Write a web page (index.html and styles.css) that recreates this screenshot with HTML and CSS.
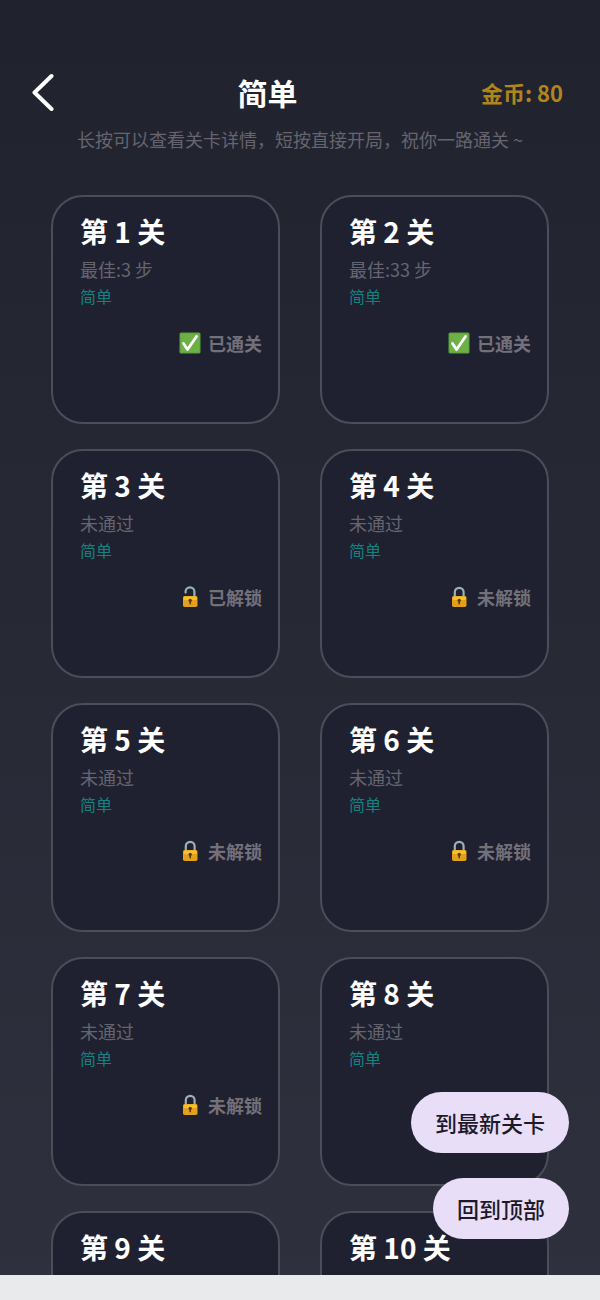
FILE: index.html
```
<!DOCTYPE html>
<html lang="zh-CN">

<head>
    <meta charset="UTF-8">
    <title>简单</title>
    <meta name="viewport" content="width=device-width, initial-scale=1" />
    <link rel="stylesheet" href="styles.css">
</head>

<body>
    <!-- shared icons -->
    <svg class="sprite" aria-hidden="true">
        <symbol id="passed" viewBox="0 0 22 22">
            <rect x="0.5" y="0.5" width="21" height="21" rx="1.5" fill="#5a9f3c" />
            <rect x="1.5" y="1.5" width="19" height="19" rx="1" fill="#6cb046" />
            <path d="M4.5 11.5 L8.5 17.5 L17.5 4.5" fill="none" stroke="#fff" stroke-width="2.8" stroke-linecap="round" stroke-linejoin="round" />
        </symbol>
        <symbol id="unlocked" viewBox="0 0 22 22">
            <path d="M6.6 6.6 V5.6 a4.4 4.2 0 0 1 8.8 0 V11" fill="none" stroke="#8fb4bf" stroke-width="2.2" stroke-linecap="round" />
            <rect x="4" y="10" width="14.5" height="11" rx="1.8" fill="#e2a01c" />
            <rect x="4.6" y="10.4" width="13.3" height="3.6" rx="1.2" fill="#f6c02e" />
            <circle cx="11.2" cy="14.4" r="1.7" fill="#5d3a12" />
            <path d="M11.2 15 V18.2" stroke="#5d3a12" stroke-width="1.6" />
        </symbol>
        <symbol id="locked" viewBox="0 0 22 22">
            <path d="M6.8 11 V6.2 a4.4 4.4 0 0 1 8.8 0 V11" fill="none" stroke="#9fb0b6" stroke-width="2.2" />
            <rect x="4" y="10" width="14.5" height="11" rx="1.8" fill="#e2a01c" />
            <rect x="4.6" y="10.4" width="13.3" height="3.6" rx="1.2" fill="#f6c02e" />
            <circle cx="11.2" cy="14.4" r="1.7" fill="#5d3a12" />
            <path d="M11.2 15 V18.2" stroke="#5d3a12" stroke-width="1.6" />
        </symbol>
    </svg>

    <div class="screen">
        <header class="header">
            <button class="back" aria-label="返回">
                <svg width="22" height="38" viewBox="0 0 22 38">
                    <path d="M19.5 3 L2.5 19.5 L19.5 36" fill="none" stroke="#fff" stroke-width="4" stroke-linecap="round" stroke-linejoin="round" />
                </svg>
            </button>
            <h1 class="title">简单</h1>
            <div class="coins">金币: 80</div>
        </header>
        <p class="hint">长按可以查看关卡详情&#xFF0C;短按直接开局&#xFF0C;祝你一路通关 ~</p>

        <main class="levels">
            <button class="level">
                <span class="level-name">第 1 关</span>
                <span class="level-best">最佳:3 步</span>
                <span class="level-mode">简单</span>
                <span class="level-status"><svg class="icon"><use href="#passed" /></svg>已通关</span>
            </button>
            <button class="level">
                <span class="level-name">第 2 关</span>
                <span class="level-best">最佳:33 步</span>
                <span class="level-mode">简单</span>
                <span class="level-status"><svg class="icon"><use href="#passed" /></svg>已通关</span>
            </button>
            <button class="level">
                <span class="level-name">第 3 关</span>
                <span class="level-best">未通过</span>
                <span class="level-mode">简单</span>
                <span class="level-status"><svg class="icon"><use href="#unlocked" /></svg>已解锁</span>
            </button>
            <button class="level">
                <span class="level-name">第 4 关</span>
                <span class="level-best">未通过</span>
                <span class="level-mode">简单</span>
                <span class="level-status"><svg class="icon"><use href="#locked" /></svg>未解锁</span>
            </button>
            <button class="level">
                <span class="level-name">第 5 关</span>
                <span class="level-best">未通过</span>
                <span class="level-mode">简单</span>
                <span class="level-status"><svg class="icon"><use href="#locked" /></svg>未解锁</span>
            </button>
            <button class="level">
                <span class="level-name">第 6 关</span>
                <span class="level-best">未通过</span>
                <span class="level-mode">简单</span>
                <span class="level-status"><svg class="icon"><use href="#locked" /></svg>未解锁</span>
            </button>
            <button class="level">
                <span class="level-name">第 7 关</span>
                <span class="level-best">未通过</span>
                <span class="level-mode">简单</span>
                <span class="level-status"><svg class="icon"><use href="#locked" /></svg>未解锁</span>
            </button>
            <button class="level">
                <span class="level-name">第 8 关</span>
                <span class="level-best">未通过</span>
                <span class="level-mode">简单</span>
            </button>
            <button class="level">
                <span class="level-name">第 9 关</span>
            </button>
            <button class="level">
                <span class="level-name">第 10 关</span>
            </button>
        </main>

        <div class="floating">
            <button class="jump">到最新关卡</button>
            <button class="jump">回到顶部</button>
        </div>
    </div>
    <div class="system-bar"></div>
</body>

</html>
```
FILE: styles.css
```
* {
    box-sizing: border-box;
}

body {
    display: flex;
    flex-direction: column;
    height: 100vh;
    margin: 0;
    color: white;
    font-family: "Noto Sans CJK SC", sans-serif;
}

button {
    margin: 0;
    padding: 0;
    border: none;
    background: none;
    color: inherit;
    font-family: inherit;
    cursor: pointer;
}

.sprite {
    display: none;
}

.screen {
    position: relative;
    flex: 1;
    min-height: 0;
    overflow: hidden;
    background: linear-gradient(#20222d, #2e313d);
}

.system-bar {
    height: 25px;
    background-color: #e9eaec;
}

.header {
    display: flex;
    justify-content: space-between;
    align-items: center;
    padding: 73px 37px 0 32px;
}

.back svg {
    display: block;
}

.title {
    margin: 0;
    font-size: 30px;
    line-height: 38px;
}

.coins {
    color: #b0851d;
    font-size: 22px;
    font-weight: bold;
    line-height: 38px;
}

.hint {
    margin: 14px 0 0;
    color: #66646f;
    font-size: 18px;
    line-height: 28px;
    text-align: center;
}

.levels {
    display: grid;
    grid-template-columns: 1fr 1fr;
    gap: 25px 40px;
    padding: 42px 51px 0;
}

.level {
    display: flex;
    flex-direction: column;
    align-items: flex-start;
    aspect-ratio: 1;
    padding: 14px 16px 16px 27px;
    border: 2px solid #4b4d59;
    border-radius: 32px;
    background-color: #1f2131;
    white-space: nowrap;
}

.level-name {
    font-size: 28px;
    font-weight: bold;
    line-height: 40px;
}

.level-best {
    margin-top: 4px;
    color: #66646f;
    font-size: 18px;
    line-height: 28px;
}

.level-mode {
    color: #12817f;
    font-size: 16px;
    line-height: 26px;
}

.level-status {
    display: flex;
    align-items: center;
    align-self: flex-end;
    gap: 7px;
    margin-top: 20px;
    color: #737079;
    font-size: 18px;
    font-weight: bold;
    line-height: 28px;
}

.icon {
    width: 22px;
    height: 22px;
}

.floating {
    position: absolute;
    right: 31px;
    bottom: 36px;
    display: flex;
    flex-direction: column;
    align-items: flex-end;
    gap: 25px;
}

.jump {
    padding: 0 24px;
    border-radius: 31px;
    background-color: #e8def8;
    color: #1d192b;
    font-size: 22px;
    font-weight: 500;
    line-height: 61px;
}
```
